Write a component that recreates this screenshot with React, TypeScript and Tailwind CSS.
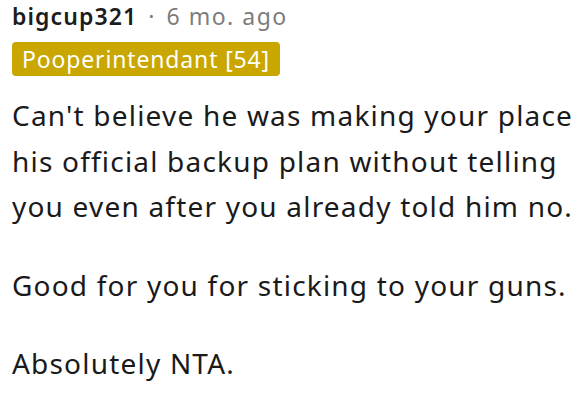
export default function App() {
  return (
    <div className="min-h-screen bg-white px-3 font-['Noto_Sans',sans-serif]">
      {/* header */}
      <div className="flex items-center text-[23px] leading-[32px] tracking-[1.1px]">
        <span className="font-semibold text-[#1c1c1c]">bigcup321</span>
        <span className="mx-[11px] text-[#7c7c7c]">·</span>
        <span className="tracking-[1.5px] text-[#7c7c7c]">6 mo. ago</span>
      </div>
      <div className="mt-[10px] inline-flex h-[34px] items-center rounded-[4px] bg-[#c9a700] px-[10px] text-[23px] tracking-[0.85px] text-white">
        Pooperintendant [54]
      </div>
      {/* body */}
      <div className="mt-[17px] text-[28px] leading-[45.5px] tracking-[1.2px] text-[#1a1a1b]">
        <p>
          Can't believe he was making your place his official backup plan without telling you even after you already
          told him no.
        </p>
        <p className="mt-[33px]">Good for you for sticking to your guns.</p>
        <p className="mt-[33px]">Absolutely NTA.</p>
      </div>
    </div>
  );
}
